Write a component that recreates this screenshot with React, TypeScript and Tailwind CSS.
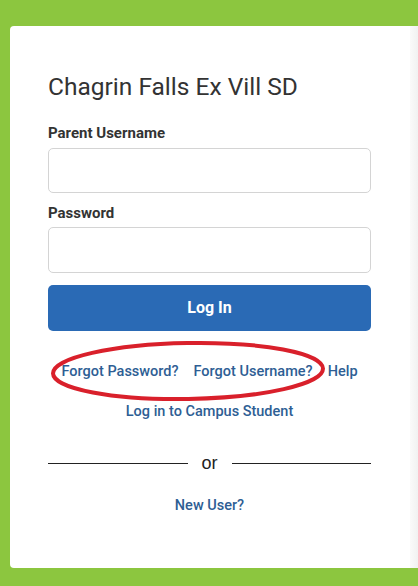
export default function App() {
  return (
    <div
      className="relative w-[418px] h-[586px] overflow-hidden bg-[#8cc63f] pt-[26px] pl-[10px]"
      style={{ fontFamily: 'Roboto, "Liberation Sans", sans-serif' }}
    >
      <div className="flex h-[542px] rounded-l-[4px] bg-white">
        <div className="w-[400px] pl-[38px] pr-[39px] pt-[45px]">
          <h1 className="text-[24.5px] leading-[32px] text-[#333]">Chagrin Falls Ex Vill SD</h1>

          <label className="mt-[20px] block text-[15px] leading-[20px] font-bold text-[#333]">Parent Username</label>
          <input className="mt-[5px] block h-[45px] w-full rounded-[5px] border border-[#d4d4d4] bg-white" />

          <label className="mt-[10px] block text-[15px] leading-[20px] font-bold text-[#333]">Password</label>
          <input type="password" className="mt-[4px] block h-[46px] w-full rounded-[5px] border border-[#d4d4d4] bg-white" />

          <button className="mt-[12px] h-[46px] w-full rounded-[5px] bg-[#2a6ab5] text-[16px] font-bold text-white">
            Log In
          </button>

          <div className="mt-[31px] flex justify-center gap-[15px] text-[14.5px] leading-[20px] font-medium text-[#2e5e94]">
            <a href="#">Forgot Password?</a>
            <a href="#">Forgot Username?</a>
            <a href="#">Help</a>
          </div>
          <div className="mt-[20px] text-center text-[14.5px] leading-[20px] font-medium text-[#2e5e94]">
            <a href="#">Log in to Campus Student</a>
          </div>

          <div className="mt-[30px] flex items-center gap-[14px]">
            <div className="h-px flex-1 bg-[#222]" />
            <span className="text-[18px] leading-[22px] text-[#222]" style={{ fontFamily: '"Liberation Sans", sans-serif' }}>or</span>
            <div className="h-px flex-1 bg-[#222]" />
          </div>

          <div className="mt-[22px] text-center text-[14.5px] leading-[20px] font-medium text-[#2e5e94]">
            <a href="#">New User?</a>
          </div>
        </div>
        <div className="flex-1 bg-gradient-to-r from-[#fafafa] to-[#f1f1f1]" />
      </div>

      <svg className="absolute left-0 top-0 pointer-events-none" width="418" height="586">
        <ellipse cx="188" cy="371" rx="135" ry="28" fill="none" stroke="#d9202b" strokeWidth="4" transform="rotate(-1 188 371)" />
      </svg>
    </div>
  );
}
